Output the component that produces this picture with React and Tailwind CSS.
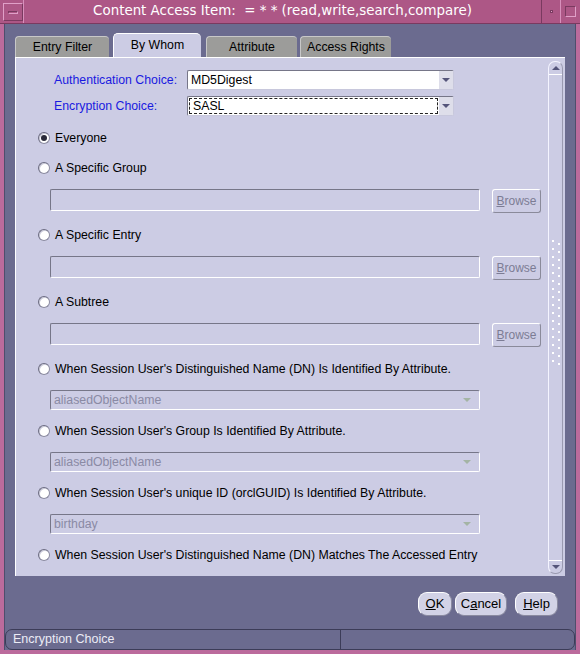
import React from 'react';

const sans = "font-['Liberation_Sans','Helvetica','Arial',sans-serif]";

function Radio({ checked, label }) {
  return (
    <div className="flex items-center h-[18px] pl-[22px]">
      <span className="w-[12px] h-[12px] rounded-full bg-white border border-[#8a8aa0] border-t-[#6a6a80] border-l-[#6a6a80] flex items-center justify-center shadow-[inset_1px_1px_0_#c8c8d8]">
        {checked && <span className="w-[6px] h-[6px] rounded-full bg-[#2a2a3a]" />}
      </span>
      <span className="ml-[5px] leading-none">{label}</span>
    </div>
  );
}

function Field() {
  return (
    <div className="flex items-start h-[24px] mt-[12px]">
      <div className="ml-[34px] w-[430px] h-[22px] border border-t-[#767688] border-l-[#767688] border-b-white border-r-white rounded-[2px]" />
      <button className="ml-[12px] w-[49px] h-[24px] rounded-[3px] border border-t-white border-l-white border-b-[#8a8a9a] border-r-[#8a8a9a] text-[#7c7c94] text-[12px] flex items-center justify-center">
        <span className="underline">B</span>rowse
      </button>
    </div>
  );
}

function DisabledCombo({ value }) {
  return (
    <div className="mt-[12px] ml-[34px] w-[430px] h-[20px] border border-t-[#767688] border-l-[#767688] border-b-white border-r-white rounded-[2px] flex items-center justify-between pl-[3px] pr-[8px] text-[#8a8aa4]">
      <span className="leading-none">{value}</span>
      <span className="w-0 h-0 border-l-[4px] border-r-[4px] border-t-[4px] border-l-transparent border-r-transparent border-t-[#a4b4a4]" />
    </div>
  );
}

function Combo({ value, focused }) {
  return (
    <div className="w-[267px] h-[20px] bg-white rounded-[2px] border border-t-[#767688] border-l-[#767688] border-b-[#c8c8dc] border-r-[#c8c8dc] flex items-stretch">
      <div className={`flex-1 flex items-center pl-[3px] ${focused ? 'border border-dashed border-[#222] m-[1px] pl-[2px]' : ''}`}>
        <span className="leading-none">{value}</span>
      </div>
      <div className="w-[14px] flex items-center justify-center bg-[#dedeea]">
        <span className="w-0 h-0 border-l-[4px] border-r-[4px] border-t-[4px] border-l-transparent border-r-transparent border-t-[#55557a]" />
      </div>
    </div>
  );
}

function Tab({ label, active, w, ml }) {
  if (active) {
    return (
      <div className={`h-[24px] bg-[#ccccE4] rounded-t-[5px] border-t border-l border-white flex items-center justify-center relative z-10 ${ml}`} style={{ width: w }}>
        {label}
      </div>
    );
  }
  return (
    <div className={`h-[21px] mt-[3px] bg-[#9c9c9a] rounded-t-[4px] border-t border-l border-[#c8c8c8] flex items-center justify-center ${ml}`} style={{ width: w }}>
      {label}
    </div>
  );
}

function ScrollBar() {
  const dots = Array.from({ length: 16 });
  return (
    <div className="w-[15px] mt-[3px] mb-[2px] mr-[2px] flex flex-col rounded-[7px] border border-[#f4f4ff] border-r-[#9a9ab0] border-b-[#9a9ab0]">
      <div className="h-[13px] flex items-center justify-center border-b border-white">
        <span className="w-0 h-0 border-l-[4px] border-r-[4px] border-b-[4px] border-l-transparent border-r-transparent border-b-[#55557a]" />
      </div>
      <div className="flex-1 flex flex-col justify-center items-center pb-[30px]">
        <div className="flex flex-col gap-[3px]">
          {dots.map((_, i) => (
            <div key={i} className="flex gap-[4px]">
              <span className="w-[2px] h-[2px] bg-white" />
              <span className="w-[2px] h-[2px] bg-white mt-[3px]" />
            </div>
          ))}
        </div>
      </div>
      <div className="h-[13px] flex items-center justify-center border-t border-white">
        <span className="w-0 h-0 border-l-[4px] border-r-[4px] border-t-[4px] border-l-transparent border-r-transparent border-t-[#55557a]" />
      </div>
    </div>
  );
}

function PillButton({ children, w }) {
  return (
    <button className="h-[24px] rounded-[9px] bg-[#d2d2e6] border border-t-white border-l-white border-b-[#8a8aa0] border-r-[#8a8aa0] text-[13px] flex items-center justify-center" style={{ width: w }}>
      {children}
    </button>
  );
}

export default function App() {
  return (
    <div className={`w-[580px] h-[654px] bg-[#bb6b9c] flex flex-col px-[4px] pb-[4px] text-[12.3px] text-black overflow-hidden ${sans}`}>
      {/* Title bar */}
      <div className="h-[24px] -mx-[4px] bg-[#ad5786] flex items-stretch border-b border-[#7a3a60]">
        <div className="w-[24px] pl-[3px] pt-[3px] pb-[2px] border-r border-[#d890bc]">
          <div className="w-[20px] h-[18px] border border-t-[#e0a0c8] border-l-[#e0a0c8] border-b-[#7a3a60] border-r-[#7a3a60] flex items-center justify-center">
            <span className="w-[10px] h-[3px] border border-t-[#7a3a60] border-l-[#7a3a60] border-b-[#e0a0c8] border-r-[#e0a0c8]" />
          </div>
        </div>
        <div className="flex-1 flex items-center justify-center text-white text-[13.4px] font-['DejaVu_Sans',sans-serif]">
          Content Access Item:&nbsp; = * * (read,write,search,compare)
        </div>
        <div className="w-[19px] border-l border-[#7a3a60] flex items-center justify-center">
          <span className="w-[3px] h-[3px] border border-[#7a3a60] bg-[#e0a0c8]" />
        </div>
        <div className="w-[20px] border-l border-[#d890bc] flex items-center justify-center">
          <span className="w-[11px] h-[11px] border border-t-[#7a3a60] border-l-[#7a3a60] border-b-[#e0a0c8] border-r-[#e0a0c8]" />
        </div>
      </div>

      {/* Body */}
      <div className="flex-1 bg-[#6b6b8f] flex flex-col border-l border-r border-[#4e4e6c]">
        {/* Tabs */}
        <div className="flex mt-[9px] ml-[10px] h-[24px]">
          <Tab label="Entry Filter" w={94} ml="" />
          <Tab label="By Whom" active w={88} ml="ml-[4px]" />
          <Tab label="Attribute" w={91} ml="ml-[5px]" />
          <Tab label="Access Rights" w={91} ml="ml-[3px]" />
        </div>

        {/* Panel */}
        <div className="ml-[10px] w-[550px] h-[519px] bg-[#ccccE4] border-t border-l border-white flex">
          <div className="flex-1 flex flex-col">
            <div className="flex items-center mt-[12px] h-[20px]">
              <span className="pl-[38px] w-[171px] text-[#1a1ae0]">Authentication Choice:</span>
              <Combo value="MD5Digest" />
            </div>
            <div className="flex items-center mt-[6px] h-[20px]">
              <span className="pl-[38px] w-[171px] text-[#1a1ae0]">Encryption Choice:</span>
              <Combo value="SASL" focused />
            </div>

            <div className="mt-[13px]"><Radio checked label="Everyone" /></div>

            <div className="mt-[12px]"><Radio label="A Specific Group" /></div>
            <Field />

            <div className="mt-[13px]"><Radio label="A Specific Entry" /></div>
            <Field />

            <div className="mt-[13px]"><Radio label="A Subtree" /></div>
            <Field />

            <div className="mt-[13px]"><Radio label="When Session User's Distinguished Name (DN) Is Identified By Attribute." /></div>
            <DisabledCombo value="aliasedObjectName" />

            <div className="mt-[12px]"><Radio label="When Session User's Group Is Identified By Attribute." /></div>
            <DisabledCombo value="aliasedObjectName" />

            <div className="mt-[12px]"><Radio label="When Session User's unique ID (orclGUID) Is Identified By Attribute." /></div>
            <DisabledCombo value="birthday" />

            <div className="mt-[12px]"><Radio label="When Session User's Distinguished Name (DN) Matches The Accessed Entry" /></div>
          </div>
          <ScrollBar />
        </div>

        {/* Buttons */}
        <div className="flex justify-end mt-[16px] pr-[17px]">
          <PillButton w={34}><span className="underline">O</span>K</PillButton>
          <div className="ml-[3px]"><PillButton w={52}>C<span className="underline">a</span>ncel</PillButton></div>
          <div className="ml-[8px]"><PillButton w={43}><span className="underline">H</span>elp</PillButton></div>
        </div>

        {/* Status bar */}
        <div className="mt-auto h-[21px] flex rounded-[7px] border border-[#3c3c58] text-[#ececf6] text-[12.5px]">
          <div className="w-[335px] border-r border-[#3c3c58] flex items-center pl-[7px]">Encryption Choice</div>
          <div className="flex-1" />
        </div>
      </div>
    </div>
  );
}
